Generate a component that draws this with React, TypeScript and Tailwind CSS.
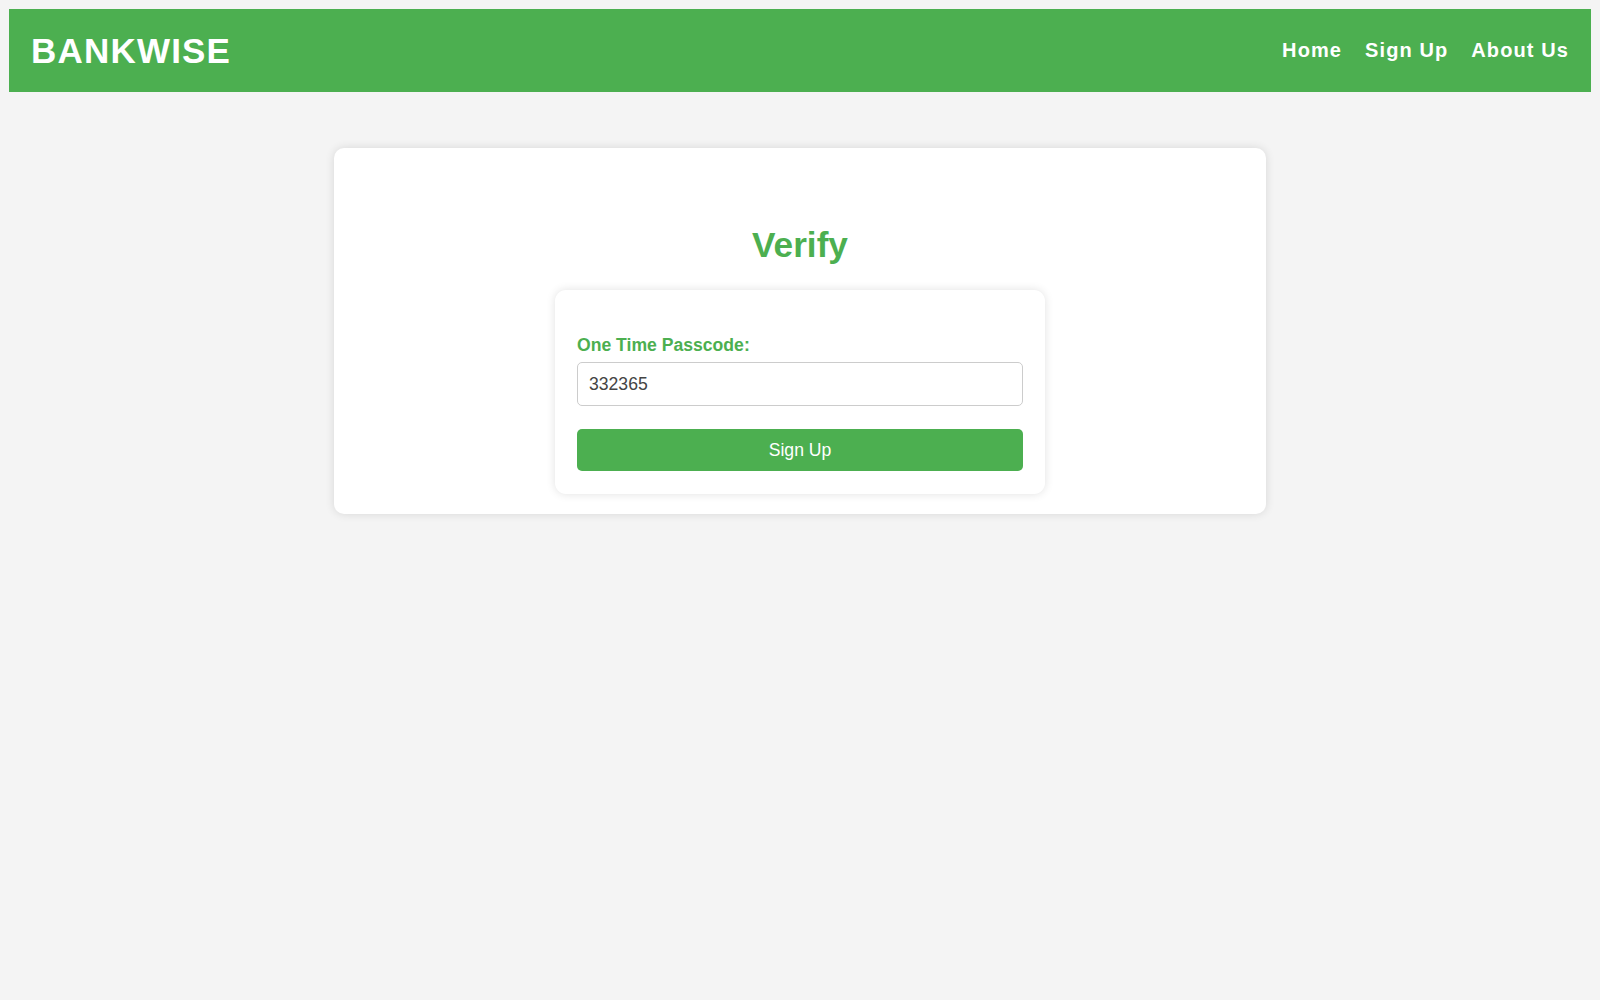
export default function App() {
  return (
    <div className="min-h-screen bg-[#f4f4f4] pt-[9px] font-['Liberation_Sans',Arial,sans-serif]">
      <header className="mx-[9px] h-[83px] bg-[#4caf50] flex items-center justify-between pl-[22px] pr-[22px]">
        <h1 className="text-[35px] font-bold tracking-[1.2px] text-white leading-none">BANKWISE</h1>
        <nav className="flex items-center gap-[23px] text-[20px] font-bold tracking-[1.1px] text-white pb-[1px]">
          <a href="#">Home</a>
          <a href="#">Sign Up</a>
          <a href="#">About Us</a>
        </nav>
      </header>

      <main className="mt-[56px] flex justify-center">
        <div className="w-[932px] bg-white rounded-[10px] shadow-[0_0_10px_rgba(0,0,0,0.12)] pt-[77px] pb-[20px] flex flex-col items-center">
          <h2 className="text-[35.2px] leading-[40px] font-bold text-[#4caf50]">Verify</h2>

          <div className="mt-[25px] w-[490px] bg-white rounded-[11px] shadow-[0_0_10px_rgba(0,0,0,0.12)] px-[22px] pt-[22px] pb-[23px]">
            <label className="mt-[23px] block text-[17.6px] leading-[20px] font-bold text-[#4caf50]">
              One Time Passcode:
            </label>
            <input
              type="text"
              defaultValue="332365"
              className="mt-[7px] block w-full h-[44px] rounded-[5px] border border-[#cccccc] px-[11px] text-[17.6px] text-[#444444] outline-none"
            />
            <button className="mt-[23px] block w-full h-[42px] rounded-[5px] bg-[#4caf50] text-[17.6px] text-white">
              Sign Up
            </button>
          </div>
        </div>
      </main>
    </div>
  );
}
